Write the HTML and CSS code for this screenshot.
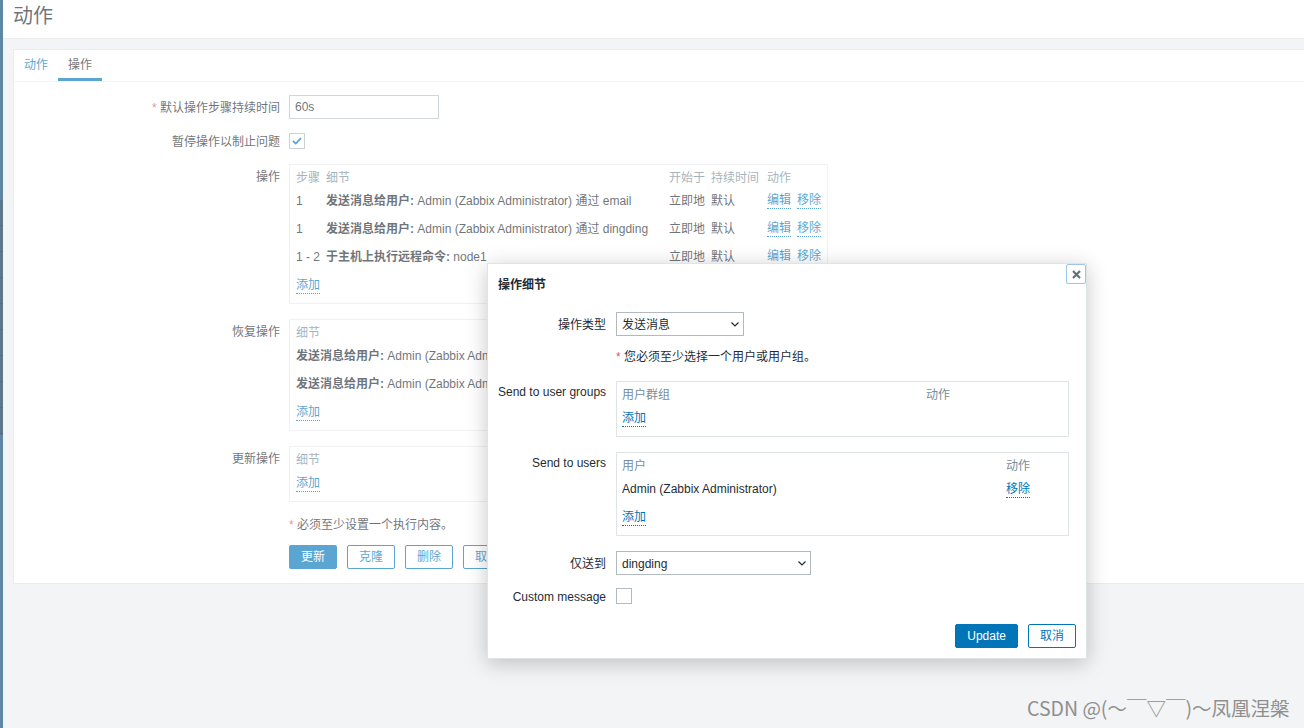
FILE: index.html
```html
<!DOCTYPE html>
<html lang="zh-CN">
<head>
<meta charset="utf-8">
<title>动作</title>
<link rel="stylesheet" href="styles.css">
</head>
<body>
<div class="app">
  <aside class="sidebar">
    <div class="sidebar-menu"><i></i><i></i><i></i><i></i><i></i><i></i><i></i><i></i><i></i></div>
  </aside>
  <main class="main">
    <header class="page-header"><h1 class="page-title">动作</h1></header>
    <div class="page-body">
      <section class="card">
        <nav class="tabs">
          <a class="tab">动作</a>
          <a class="tab tab-active">操作</a>
        </nav>
        <div class="form">
          <div class="frow">
            <label class="flabel"><span class="req">*</span> 默认操作步骤持续时间</label>
            <div class="fctrl"><input class="text-input" type="text" value="60s"></div>
          </div>
          <div class="frow row-gap-10">
            <label class="flabel">暂停操作以制止问题</label>
            <div class="fctrl"><span class="checkbox checkbox-row"><svg width="10" height="8" viewBox="0 0 10 8"><path d="M1 4 L3.8 6.6 L9 1.2" fill="none" stroke="#0275b8" stroke-width="1.8"/></svg></span></div>
          </div>
          <div class="frow row-gap-11">
            <label class="flabel flabel-top">操作</label>
            <div class="fctrl">
              <div class="op-box">
                <div class="op-grid op-grid-main">
                  <div class="th">步骤</div><div class="th">细节</div><div class="th">开始于</div><div class="th">持续时间</div><div class="th">动作</div>
                  <div>1</div><div><b>发送消息给用户:</b> Admin (Zabbix Administrator) 通过 email</div><div>立即地</div><div>默认</div><div class="acts"><a class="link">编辑</a><a class="link">移除</a></div>
                  <div>1</div><div><b>发送消息给用户:</b> Admin (Zabbix Administrator) 通过 dingding</div><div>立即地</div><div>默认</div><div class="acts"><a class="link">编辑</a><a class="link">移除</a></div>
                  <div>1 - 2</div><div><b>于主机上执行远程命令:</b> node1</div><div>立即地</div><div>默认</div><div class="acts"><a class="link">编辑</a><a class="link">移除</a></div>
                </div>
                <div class="add-row"><a class="link">添加</a></div>
              </div>
            </div>
          </div>
          <div class="frow row-gap-15">
            <label class="flabel flabel-top">恢复操作</label>
            <div class="fctrl">
              <div class="op-box">
                <div class="op-grid op-grid-sub">
                  <div class="th">细节</div>
                  <div><b>发送消息给用户:</b> Admin (Zabbix Administrator) 通过 email</div>
                  <div><b>发送消息给用户:</b> Admin (Zabbix Administrator) 通过 dingding</div>
                </div>
                <div class="add-row"><a class="link">添加</a></div>
              </div>
            </div>
          </div>
          <div class="frow row-gap-15">
            <label class="flabel flabel-top">更新操作</label>
            <div class="fctrl">
              <div class="op-box">
                <div class="op-grid op-grid-sub">
                  <div class="th">细节</div>
                </div>
                <div class="add-row"><a class="link">添加</a></div>
              </div>
            </div>
          </div>
          <div class="frow row-gap-13">
            <div></div>
            <div class="note"><span class="req">*</span> 必须至少设置一个执行内容。</div>
          </div>
          <div class="frow row-gap-11">
            <div></div>
            <div class="btn-row">
              <button class="btn btn-primary">更新</button>
              <button class="btn">克隆</button>
              <button class="btn">删除</button>
              <button class="btn">取消</button>
            </div>
          </div>
        </div>
      </section>
    </div>
  </main>
</div>

<div class="backdrop"></div>

<div class="dialog">
  <div class="dialog-head">
    <h4 class="dialog-title">操作细节</h4>
    <button class="dialog-close"><svg width="9" height="9" viewBox="0 0 9 9"><path d="M1 1L8 8M8 1L1 8" stroke="#5f717c" stroke-width="2.2"/></svg></button>
  </div>
  <div class="dialog-body">
    <div class="drow drow-first">
      <label class="dlabel">操作类型</label>
      <div class="select select-type"><span>发送消息</span><svg width="8" height="5" viewBox="0 0 8 5"><path d="M0.5 0.5 L4 4 L7.5 0.5" fill="none" stroke="#1f2c33" stroke-width="1.2"/></svg></div>
    </div>
    <div class="drow drow-note">
      <div></div>
      <div class="note"><span class="req">*</span> 您必须至少选择一个用户或用户组。</div>
    </div>
    <div class="drow drow-box">
      <label class="dlabel dlabel-top">Send to user groups</label>
      <div class="d-box">
        <div class="d-grid d-grid-groups">
          <div class="th">用户群组</div><div class="th">动作</div>
        </div>
        <div class="add-row"><a class="link">添加</a></div>
      </div>
    </div>
    <div class="drow drow-box">
      <label class="dlabel dlabel-top">Send to users</label>
      <div class="d-box">
        <div class="d-grid d-grid-users">
          <div class="th">用户</div><div class="th">动作</div>
          <div class="cell">Admin (Zabbix Administrator)</div><div class="cell"><a class="link">移除</a></div>
        </div>
        <div class="add-row"><a class="link">添加</a></div>
      </div>
    </div>
    <div class="drow drow-select">
      <label class="dlabel">仅送到</label>
      <div class="select select-media"><span>dingding</span><svg width="8" height="5" viewBox="0 0 8 5"><path d="M0.5 0.5 L4 4 L7.5 0.5" fill="none" stroke="#1f2c33" stroke-width="1.2"/></svg></div>
    </div>
    <div class="drow drow-check">
      <label class="dlabel">Custom message</label>
      <div class="dctrl"><span class="checkbox checkbox-row"></span></div>
    </div>
  </div>
  <div class="dialog-foot">
    <button class="btn btn-primary">Update</button>
    <button class="btn">取消</button>
  </div>
</div>

<div class="watermark">CSDN @(～￣▽￣)～凤凰涅槃</div>
</body>
</html>
```

FILE: styles.css
```css
* { box-sizing: border-box; }
html, body { margin: 0; padding: 0; }
body {
  width: 1304px;
  height: 728px;
  overflow: hidden;
  position: relative;
  font: 12px/18px "Liberation Sans", "Noto Sans CJK SC", sans-serif;
  color: #1f2c33;
  background: #ebeef0;
}
b { font-weight: bold; }

.app { display: flex; height: 728px; }

.sidebar { width: 3px; flex: none; background: #084772; padding-top: 200px; }
.sidebar-menu { display: flex; flex-direction: column; background: #05304b; height: 235px; }
.sidebar-menu i { display: block; height: 26px; border-bottom: 1px solid #021f33; }

.main { flex: 1; min-width: 0; }

.page-header { height: 39px; background: #fff; border-bottom: 1px solid #dfe4e7; padding-left: 10px; }
.page-title { margin: 0; padding-top: 1px; font-size: 20px; font-weight: normal; line-height: 30px; color: #1f2c33; }

.page-body { padding: 10px 0 0 10px; }

.card { background: #fff; border: 1px solid #dfe4e7; border-right: 0; }

.tabs { display: flex; height: 32px; border-bottom: 1px solid #ebeef0; }
.tab { display: block; height: 31px; padding: 3px 10px 0; line-height: 25px; border-bottom: 3px solid transparent; color: #0275b8; }
.tab-active { color: #1f2c33; border-bottom-color: #0275b8; }

.form { padding: 13px 0 14px; }
.frow { display: grid; grid-template-columns: 266px 1fr; column-gap: 9px; }
.row-gap-10 { margin-top: 10px; }
.row-gap-11 { margin-top: 11px; }
.row-gap-13 { margin-top: 13px; }
.row-gap-15 { margin-top: 15px; }

.flabel { text-align: right; padding-top: 2px; line-height: 22px; white-space: nowrap; color: #1f2c33; }
.flabel-top { line-height: 18px; padding-top: 4px; }
.req { color: #e45959; }

.text-input {
  display: block; width: 150px; height: 24px; margin: 0;
  border: 1px solid #b6bfc5; padding: 0 5px;
  font: inherit; color: #1f2c33; background: #fff; outline: none;
}

.checkbox {
  display: flex; align-items: center; justify-content: center;
  width: 16px; height: 16px; border: 1px solid #b0bac0; background: #fff;
}
.checkbox-row { margin-top: 4px; }

.op-box { width: 539px; border: 1px solid #e6eaec; padding: 3px 5px 5px 6px; }
.op-grid { display: grid; grid-template-rows: 18px; grid-auto-rows: 28px; align-items: center; white-space: nowrap; }
.op-grid > div, .d-grid > div { padding-top: 2px; }
.op-grid-main { grid-template-columns: 30px 343px 42px 56px 55px; }
.op-grid-sub { grid-template-columns: 1fr; }
.th { color: #768d99; }
.acts { display: flex; gap: 6px; }
.add-row { height: 28px; display: flex; align-items: center; padding-top: 3px; }

.link { color: #0275b8; text-decoration: none; border-bottom: 1px dotted #0275b8; line-height: 15px; display: inline-block; }

.note { line-height: 18px; padding-top: 1px; color: #1f2c33; }

.btn-row { display: flex; gap: 10px; }
.btn {
  height: 24px; padding: 0 11px; margin: 0;
  font: inherit; line-height: 22px;
  color: #0275b8; background: #fff; border: 1px solid #0275b8; border-radius: 2px;
}
.btn-primary { color: #fff; background: #0275b8; }

.backdrop { position: absolute; inset: 0; background: rgba(255, 255, 255, 0.35); }

.dialog {
  position: absolute; left: 487px; top: 263px; width: 600px;
  background: #fff; border: 1px solid #dfe4e7;
  box-shadow: 0 4px 20px 0 rgba(0, 0, 0, 0.22);
}
.dialog-head { position: relative; padding: 11px 10px; }
.dialog-title { margin: 0; padding-top: 2px; height: 18px; font-size: 12px; font-weight: bold; line-height: 16px; color: #1f2c33; }
.dialog-close {
  position: absolute; top: 0; right: 0; width: 20px; height: 20px; padding: 0; margin: 0;
  display: flex; align-items: center; justify-content: center;
  background: #fff; border: 1px solid #9cc6e6; border-radius: 2px;
}

.dialog-body { padding: 0 10px; }
.drow { display: grid; grid-template-columns: 108px 1fr; column-gap: 10px; }
.drow-first { margin-top: 8px; }
.drow-note { margin-top: 11px; }
.drow-box { margin-top: 15px; }
.drow-select { margin-top: 15px; }
.drow-check { margin-top: 9px; }
.dlabel { text-align: right; padding-top: 2px; line-height: 22px; white-space: nowrap; color: #1f2c33; }
.dlabel-top { line-height: 18px; padding-top: 2px; }

.select {
  display: flex; align-items: center; justify-content: space-between;
  height: 24px; border: 1px solid #b0bac0; padding: 1px 4px 0 5px; background: #fff;
}
.select-type { width: 128px; }
.select-media { width: 195px; }

.d-box { width: 453px; border: 1px solid #dfe4e7; padding: 3px 5px 5px 5px; }
.d-grid { display: grid; grid-template-rows: 18px; grid-auto-rows: 28px; align-items: center; white-space: nowrap; }
.d-grid-groups { grid-template-columns: 304px 1fr; }
.d-grid-users { grid-template-columns: 384px 1fr; }

.dialog-foot { display: flex; justify-content: flex-end; gap: 10px; padding: 16px 10px 10px; }

.watermark {
  position: absolute; left: 1027px; top: 696px;
  font-family: "Noto Sans CJK SC", sans-serif; font-size: 19.5px; line-height: 24px;
  color: #8f8f8f; white-space: nowrap;
}
```
